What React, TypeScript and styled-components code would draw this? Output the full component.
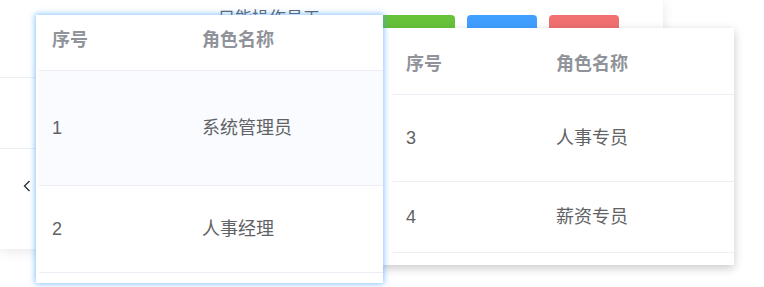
import React from "react";
import styled, { createGlobalStyle } from "styled-components";

const GlobalStyle = createGlobalStyle`
  html, body {
    margin: 0;
    padding: 0;
    background: #ffffff;
  }
  body {
    font-family: "Liberation Sans", "Noto Sans CJK SC", sans-serif;
    overflow: hidden;
  }
`;

const colors = {
  header: "#909399",
  text: "#606266",
  dark: "#303133",
  line: "#ebeef5",
  success: "#67c23a",
  primary: "#409eff",
  danger: "#f07070",
};

type Role = { id: number; name: string; height: number; hover?: boolean };

const leftRoles: Role[] = [
  { id: 1, name: "系统管理员", height: 115, hover: true },
  { id: 2, name: "人事经理", height: 87 },
];

const rightRoles: Role[] = [
  { id: 3, name: "人事专员", height: 87 },
  { id: 4, name: "薪资专员", height: 71 },
];

function RoleTable({
  roles,
  headerHeight,
}: {
  roles: Role[];
  headerHeight: number;
}) {
  return (
    <>
      <StyledHeadRow $height={headerHeight}>
        <StyledIdCell>序号</StyledIdCell>
        <StyledNameCell>角色名称</StyledNameCell>
      </StyledHeadRow>
      {roles.map((role) => (
        <StyledRow key={role.id} $height={role.height} $hover={role.hover}>
          <StyledIdCell>{role.id}</StyledIdCell>
          <StyledNameCell>{role.name}</StyledNameCell>
        </StyledRow>
      ))}
    </>
  );
}

function App() {
  return (
    <StyledStage>
      <GlobalStyle />
      <StyledCard>
        <StyledToolbar>
          <StyledHint>只能操作员工</StyledHint>
          <StyledButton $color={colors.success} $width={100} />
          <StyledButton $color={colors.primary} $width={70} />
          <StyledButton $color={colors.danger} $width={70} />
        </StyledToolbar>
        <StyledCardRow />
        <StyledPager>
          <svg width="8" height="12" viewBox="0 0 8 12">
            <path
              d="M6.5 1 L1.5 6 L6.5 11"
              fill="none"
              stroke={colors.dark}
              strokeWidth="1.4"
            />
          </svg>
        </StyledPager>
      </StyledCard>

      <StyledPanel
        $left={378}
        $top={28}
        $width={356}
        $inset={15}
        $bottom={12}
        $focus={false}
      >
        <RoleTable roles={rightRoles} headerHeight={67} />
      </StyledPanel>
      <StyledPanel
        $left={36}
        $top={15}
        $width={347}
        $inset={3}
        $bottom={10}
        $focus
      >
        <RoleTable roles={leftRoles} headerHeight={56} />
      </StyledPanel>
    </StyledStage>
  );
}

const StyledStage = styled.div`
  position: relative;
  width: 764px;
  height: 287px;
`;

const StyledCard = styled.div`
  width: 663px;
  height: 249px;
  background: #ffffff;
  box-shadow: 0 2px 12px 0 rgba(0, 0, 0, 0.1);
  display: flex;
  flex-direction: column;
`;

const StyledToolbar = styled.div`
  height: 78px;
  box-sizing: border-box;
  border-bottom: 1px solid ${colors.line};
  display: flex;
  align-items: flex-start;
  padding-top: 15px;
  padding-left: 218px;
`;

const StyledHint = styled.span`
  font-size: 17px;
  line-height: 20px;
  margin-top: -6px;
  color: ${colors.text};
  width: 137px;
`;

const StyledButton = styled.div<{ $color: string; $width: number }>`
  width: ${(p) => p.$width}px;
  height: 36px;
  margin-right: 12px;
  border-radius: 4px;
  background: ${(p) => p.$color};
`;

const StyledCardRow = styled.div`
  height: 71px;
  box-sizing: border-box;
  border-bottom: 1px solid ${colors.line};
`;

const StyledPager = styled.div`
  flex: 1;
  display: flex;
  align-items: center;
  padding-left: 23px;
  padding-bottom: 26px;
  box-sizing: border-box;
`;

const StyledPanel = styled.div<{
  $left: number;
  $top: number;
  $width: number;
  $inset: number;
  $bottom: number;
  $focus: boolean;
}>`
  position: absolute;
  left: ${(p) => p.$left}px;
  top: ${(p) => p.$top}px;
  width: ${(p) => p.$width}px;
  padding: 0 0 ${(p) => p.$bottom}px ${(p) => p.$inset}px;
  box-sizing: border-box;
  background: #ffffff;
  box-shadow: ${(p) =>
    p.$focus
      ? "0 0 6px 1px rgba(64, 158, 255, 0.6)"
      : "0 3px 9px 0 rgba(0, 0, 0, 0.22)"};
`;

const StyledHeadRow = styled.div<{ $height: number }>`
  height: ${(p) => p.$height}px;
  box-sizing: border-box;
  border-bottom: 1px solid ${colors.line};
  display: flex;
  align-items: flex-end;
  padding-bottom: 20px;
  font-size: 18px;
  line-height: 20px;
  font-weight: bold;
  color: ${colors.header};
`;

const StyledRow = styled.div<{ $height: number; $hover?: boolean }>`
  height: ${(p) => p.$height}px;
  box-sizing: border-box;
  border-bottom: 1px solid ${colors.line};
  display: flex;
  align-items: center;
  font-size: 18px;
  line-height: 20px;
  color: ${colors.text};
  background: ${(p) => (p.$hover ? "#f9fbfe" : "#ffffff")};
`;

const StyledIdCell = styled.div`
  width: 163px;
  padding-left: 13px;
  box-sizing: border-box;
`;

const StyledNameCell = styled.div`
  flex: 1;
`;

export default App;
